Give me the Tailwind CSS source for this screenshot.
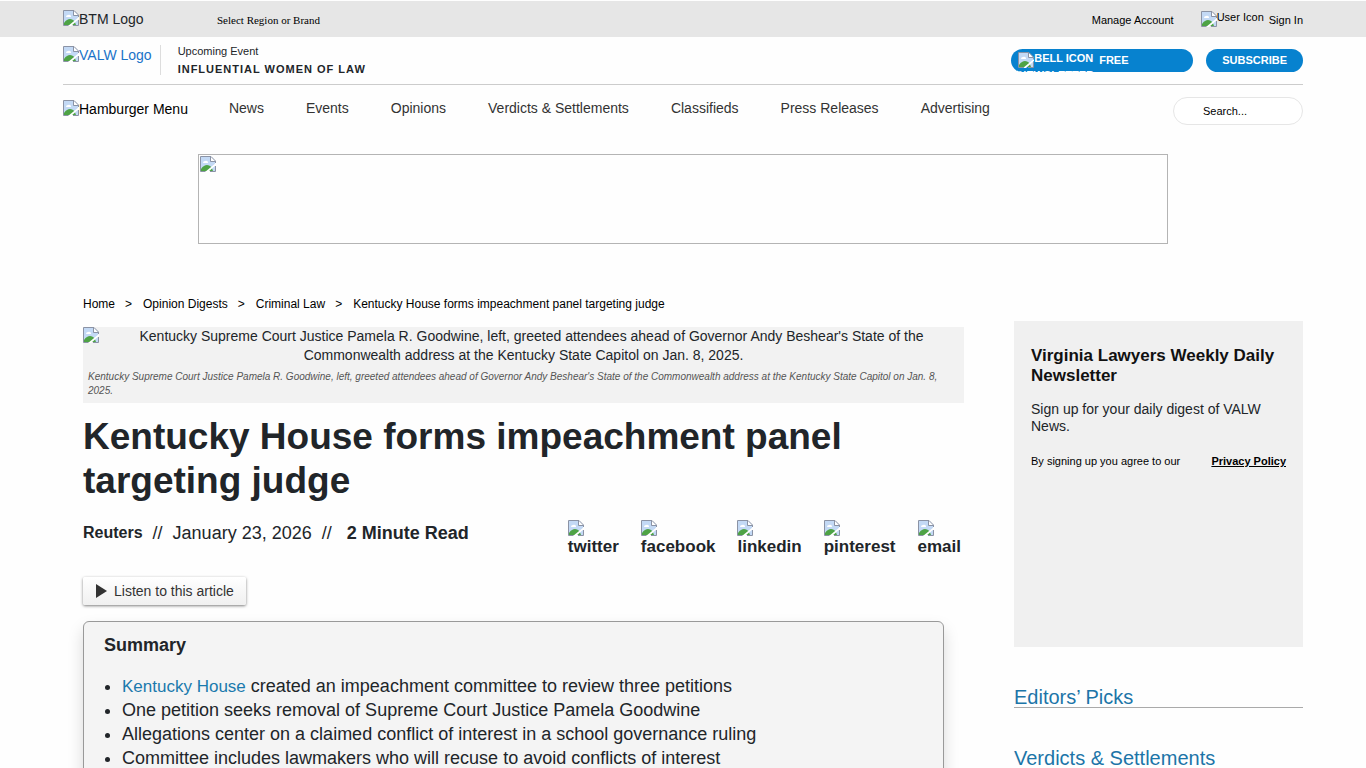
<!DOCTYPE html>
<html lang="en">
<head>
    <meta charset="UTF-8">
    <meta name="viewport" content="width=device-width, initial-scale=1.0">
    <title>Kentucky House forms impeachment panel targeting judge</title>
    <script src="https://cdn.jsdelivr.net/npm/@tailwindcss/browser@4"></script>
</head>
<body class="bg-[#fefefe] font-['Liberation_Sans',Arial,sans-serif] text-sm text-[#212529]">

    <!-- Shared icon -->
    <svg class="hidden" xmlns="http://www.w3.org/2000/svg">
        <symbol id="picture" viewBox="0 0 16 16">
            <path d="M1 1h10l4 4v10H1z" fill="#c3d9f5"/>
            <path d="M3 7a2 2 0 0 1 2-2 2 2 0 0 1 3 2z" fill="#fff"/>
            <path d="M1 15v-2c2-3 4-4 6-4 3 0 5 2 6 6z" fill="#4ea345"/>
            <path d="M16 7v2L8 16H5z" fill="#fff"/>
            <path d="M11 1v4h4z" fill="#fff"/>
            <path d="M5.500 15.500H.5V.5h10.500l4.500 4.500v2M15.500 10v5.500H10M10.500.5v5h5" fill="none" stroke="#8b93a5"/>
        </symbol>
    </svg>

    <!-- Top bar -->
    <div class="mt-px bg-[#e6e6e6]">
        <div class="mx-auto flex h-9 max-w-[1240px] items-center">
            <a href="#" class="flex w-[154px] items-start leading-[18px]"><svg class="size-4"><use href="#picture"/></svg>BTM Logo</a>
            <span class="pt-1 font-['Liberation_Serif',serif] text-[11px] text-black">Select Region or Brand</span>
            <div class="ml-auto flex items-center pt-1 text-[11px] text-black">
                <a href="#" class="mr-[27px]">Manage Account</a>
                <a href="#" class="flex items-center gap-[5px]">
                    <span class="flex h-5 items-start"><svg class="size-4"><use href="#picture"/></svg><span class="leading-3">User Icon</span></span>
                    Sign In
                </a>
            </div>
        </div>
    </div>

    <!-- Header -->
    <header class="mx-auto max-w-[1240px]">
        <div class="flex h-12 border-b border-[#ccc]">
            <a href="#" class="mt-[9px] mr-2 flex items-start leading-[18px] text-[#1a73c8]"><svg class="size-4"><use href="#picture"/></svg>VALW Logo</a>
            <div class="mt-2 h-[30px] border-l border-[#ddd] pl-[17px] text-[11px]">
                <p class="leading-3">Upcoming Event</p>
                <p class="mt-1 leading-4 font-bold tracking-[1px]">INFLUENTIAL WOMEN OF LAW</p>
            </div>
            <div class="mt-3 ml-auto flex gap-[13px] text-[11px] font-bold text-white">
                <button type="button" class="flex h-[23px] w-[182px] items-start gap-1 overflow-hidden rounded-full bg-[#0782cf] pl-[7px] text-left">
                    <span class="w-[77px] pt-[2px] leading-[15px]"><svg class="inline size-4 align-text-top"><use href="#picture"/></svg>BELL ICON NEWSLETTER</span>
                    <span class="leading-[23px]">FREE</span>
                </button>
                <button type="button" class="h-[23px] rounded-full bg-[#0782cf] px-4">SUBSCRIBE</button>
            </div>
        </div>

        <nav class="flex h-[46px] items-center gap-[42px] text-[#333]">
            <button type="button" class="-mr-px flex items-start pt-0.5 leading-[18px] text-black"><svg class="size-4"><use href="#picture"/></svg>Hamburger Menu</button>
            <a href="#">News</a>
            <a href="#">Events</a>
            <a href="#">Opinions</a>
            <a href="#">Verdicts &amp; Settlements</a>
            <a href="#">Classifieds</a>
            <a href="#">Press Releases</a>
            <a href="#">Advertising</a>
            <input type="search" aria-label="Search" placeholder="Search..." class="mt-[6px] ml-auto h-7 w-[130px] rounded-full border border-[#e6e6e6] bg-white pl-[29px] text-[11px] placeholder:text-black">
        </nav>
    </header>

    <!-- Banner -->
    <div class="mx-auto mt-[23px] h-[90px] max-w-[970px] border border-[#b4b4b4] p-px">
        <svg class="size-4"><use href="#picture"/></svg>
    </div>

    <div class="mx-auto flex max-w-[1240px] gap-[50px] pt-[50px] pb-10 pl-5">

        <!-- Article -->
        <main class="min-w-0 flex-1">
            <nav class="flex gap-[10px] text-xs leading-5 text-black">
                <a href="#">Home</a><span class="pr-px">&gt;</span>
                <a href="#">Opinion Digests</a><span class="pr-px">&gt;</span>
                <a href="#">Criminal Law</a><span class="pr-px">&gt;</span>
                <span>Kentucky House forms impeachment panel targeting judge</span>
            </nav>

            <figure class="mt-[13px] bg-[#f2f2f2] pb-[5px]">
                <div class="text-center leading-[19px]">
                    <svg class="float-left size-4"><use href="#picture"/></svg>
                    Kentucky Supreme Court Justice Pamela R. Goodwine, left, greeted attendees ahead of Governor Andy Beshear's State of the Commonwealth address at the Kentucky State Capitol on Jan. 8, 2025.
                </div>
                <figcaption class="px-[5px] pt-[5px] text-[10px] leading-[14px] text-[#555] italic">Kentucky Supreme Court Justice Pamela R. Goodwine, left, greeted attendees ahead of Governor Andy Beshear's State of the Commonwealth address at the Kentucky State Capitol on Jan. 8, 2025.</figcaption>
            </figure>

            <h1 class="mt-3 text-[37px] leading-[44px] font-bold">Kentucky House forms impeachment panel targeting judge</h1>

            <div class="mt-[17px] flex items-start justify-between pr-[3px]">
                <div class="flex h-[26px] items-center text-lg">
                    <a href="#" class="text-base font-bold">Reuters</a>
                    <span class="mx-[10px]">//</span>
                    <span>January 23, 2026</span>
                    <span class="ml-[10px]">//</span>
                    <b class="ml-[15px]">2 Minute Read</b>
                </div>
                <div class="flex gap-[22px] text-[17px] leading-[22px] font-bold">
                    <a href="#"><svg class="size-4"><use href="#picture"/></svg>twitter</a>
                    <a href="#"><svg class="size-4"><use href="#picture"/></svg>facebook</a>
                    <a href="#"><svg class="size-4"><use href="#picture"/></svg>linkedin</a>
                    <a href="#"><svg class="size-4"><use href="#picture"/></svg>pinterest</a>
                    <a href="#"><svg class="size-4"><use href="#picture"/></svg>email</a>
                </div>
            </div>

            <button type="button" class="mt-[19px] flex h-7 items-center gap-[7px] rounded-xs bg-linear-to-b from-white to-[#f0f0f0] px-3 text-[#333] shadow-[0_1px_3px_rgba(0,0,0,0.5)]">
                <svg class="h-[14px] w-3" viewBox="0 0 12 14"><path d="M1 0l11 7-11 7z" fill="#333"/></svg>
                Listen to this article
            </button>

            <section class="mt-4 mr-5 rounded-md border border-[#999] bg-[#f4f4f4] px-5 pt-3 pb-5 text-lg leading-6 shadow-[0_8px_16px_rgba(0,0,0,0.15)]">
                <h2 class="leading-[22px] font-bold">Summary</h2>
                <ul class="mt-[18px] list-disc pl-[18px]">
                    <li><a href="#" class="text-[17px] leading-5 text-[#1a7aad]">Kentucky House</a> created an impeachment committee to review three petitions</li>
                    <li>One petition seeks removal of Supreme Court Justice Pamela Goodwine</li>
                    <li>Allegations center on a claimed conflict of interest in a school governance ruling</li>
                    <li>Committee includes lawmakers who will recuse to avoid conflicts of interest</li>
                </ul>
            </section>
        </main>

        <!-- Sidebar -->
        <aside class="mt-[27px] w-[289px] shrink-0">
            <div class="h-[326px] bg-[#f0f0f0] px-[17px] pt-[25px]">
                <h3 class="text-[17px] leading-5 font-bold text-[#111]">Virginia Lawyers Weekly Daily Newsletter</h3>
                <p class="mt-[15px] leading-[17px]">Sign up for your daily digest of VALW News.</p>
                <p class="mt-[18px] flex justify-between text-[11px] leading-4 text-black">
                    <span>By signing up you agree to our</span>
                    <a href="#" class="font-bold underline">Privacy Policy</a>
                </p>
            </div>
            <h3 class="mt-10 border-b border-[#aaa] text-xl leading-5 text-[#1c75a8]">Editors’ Picks</h3>
            <h3 class="mt-10 border-b border-[#aaa] text-xl leading-5 text-[#1c75a8]">Verdicts &amp; Settlements</h3>
        </aside>
    </div>

</body>
</html>
